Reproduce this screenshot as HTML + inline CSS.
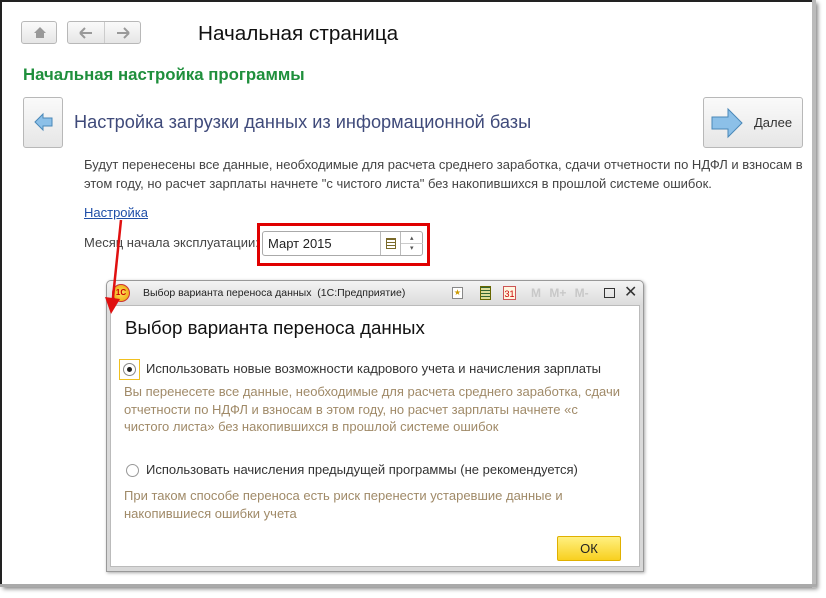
<!DOCTYPE html>
<html><head><meta charset="utf-8"><style>
*{margin:0;padding:0;box-sizing:border-box}
body{width:826px;height:598px;background:#fff;position:relative;overflow:hidden;font-family:"Liberation Sans","DejaVu Sans",sans-serif;color:#444}
.a{position:absolute}
.btn{border:1px solid #b8b8b8;border-radius:3px;background:linear-gradient(#fafafa,#e6e6e6)}
</style></head><body>
<div class="a" style="left:0;top:0;width:815px;height:586px;border-left:2px solid #222;border-top:2px solid #222;box-shadow:3px 3px 4px #888"></div>
<div class="a" style="left:812px;top:0;width:4px;height:588px;background:#bbb"></div>
<div class="a" style="left:0;top:584px;width:816px;height:3px;background:#aaa"></div>

<div class="a btn" style="left:21px;top:21px;width:36px;height:23px"><svg width="36" height="22"><path d="M12 11 L18 5 L24 11 L22 11 L22 16 L14 16 L14 11 Z" fill="#999"/></svg></div>
<div class="a btn" style="left:67px;top:21px;width:74px;height:23px"><div class="a" style="left:36px;top:0;width:1px;height:21px;background:#ccc"></div>
<svg width="72" height="22" class="a" style="left:0;top:0"><path d="M12 11h12M12 11l5-5M12 11l5 5" stroke="#999" stroke-width="2" fill="none"/><path d="M61 11H49M61 11l-5-5M61 11l-5 5" stroke="#999" stroke-width="2" fill="none"/></svg></div>
<div class="a" style="left:198px;top:22px;font-size:20.7px;color:#111">Начальная страница</div>
<div class="a" style="left:23px;top:65px;font-size:16.8px;font-weight:bold;color:#1f8f3c">Начальная настройка программы</div>

<div class="a btn" style="left:23px;top:97px;width:40px;height:51px"><svg width="38" height="50"><path d="M11 24 L19 16 L19 20 L28 20 L28 28 L19 28 L19 32 Z" fill="#8cc0e8" stroke="#4a88b8"/></svg></div>
<div class="a" style="left:74px;top:112px;font-size:18.2px;color:#3f4a7a">Настройка загрузки данных из информационной базы</div>
<div class="a btn" style="left:703px;top:97px;width:100px;height:51px"><svg width="50" height="50" class="a" style="left:4px;top:0"><path d="M4 19 L20 19 L20 11 L34 25 L20 39 L20 31 L4 31 Z" fill="#8cc0e8" stroke="#4a88b8"/></svg><div class="a" style="left:50px;top:17px;font-size:13px;color:#333">Далее</div></div>

<div class="a" style="left:84px;top:155px;font-size:13px;line-height:19px;color:#444;width:740px">Будут перенесены все данные, необходимые для расчета среднего заработка, сдачи отчетности по НДФЛ и взносам в<br>этом году, но расчет зарплаты начнете "с чистого листа" без накопившихся в прошлой системе ошибок.</div>
<div class="a" style="left:84px;top:205px;font-size:13px;color:#1f4fa8;text-decoration:underline">Настройка</div>
<div class="a" style="left:84px;top:235px;font-size:13px;color:#444">Месяц начала эксплуатации:</div>
<div class="a" style="left:257px;top:223px;width:173px;height:43px;border:3px solid #e00000"></div>
<div class="a" style="left:262px;top:231px;width:161px;height:25px;border:1px solid #aaa;border-radius:3px;background:#fff">
<div class="a" style="left:5px;top:4px;font-size:13px;color:#222">Март 2015</div>
<div class="a" style="left:117px;top:0;width:1px;height:23px;background:#bbb"></div>
<div class="a" style="left:123px;top:6px;width:10px;height:11px;border:1px solid #7a6a2a;background:repeating-linear-gradient(#7a6a2a 0 1px,#fff 1px 3px)"></div>
<div class="a" style="left:137px;top:0;width:1px;height:23px;background:#bbb"></div>
<div class="a" style="left:138px;top:11px;width:22px;height:1px;background:#ccc"></div>
<div class="a" style="left:147px;top:2px;font-size:7px;color:#555">▴</div><div class="a" style="left:147px;top:12px;font-size:7px;color:#555">▾</div>
</div>

<div class="a" style="left:106px;top:280px;width:538px;height:292px;border:1px solid #999;border-radius:5px 5px 0 0;background:linear-gradient(#f4f4f4,#dcdcdc 24px,#d8d8d8);box-shadow:1px 1px 3px #aaa">
<div class="a" style="left:5px;top:3px;width:18px;height:18px;border-radius:50%;background:radial-gradient(#ffe060,#e8a000);border:1px solid #c33;font-size:8px;font-weight:bold;color:#c00;text-align:center;line-height:16px">1С</div>
<div class="a" style="left:36px;top:6px;font-size:10.5px;color:#222">Выбор варианта переноса данных &nbsp;(1С:Предприятие)</div>
<div class="a" style="left:345px;top:6px;width:11px;height:12px;border:1px solid #888;background:#fff;font-size:8px;color:#c90;text-align:center;line-height:10px">★</div>
<div class="a" style="left:373px;top:5px;width:11px;height:14px;background:repeating-linear-gradient(#363 0 1px,#dd9 1px 3px);border:1px solid #660"></div>
<div class="a" style="left:396px;top:5px;width:13px;height:14px;border:1px solid #c55;background:#fff6e0;font-size:9px;color:#c00;text-align:center;line-height:14px">31</div>
<div class="a" style="left:424px;top:5px;font-size:12px;font-weight:bold;color:#c8c8c8;word-spacing:5px">M M+ M-</div>
<div class="a" style="left:497px;top:7px;width:11px;height:10px;border:1.5px solid #333"></div>
<div class="a" style="left:517px;top:1px;font-size:16px;color:#333">✕</div>
<div class="a" style="left:3px;top:24px;width:530px;height:262px;background:#fff;border:1px solid #bbb">
<div class="a" style="left:14px;top:11px;font-size:18.7px;color:#111">Выбор варианта переноса данных</div>
<div class="a" style="left:8px;top:53px;width:21px;height:21px;border:1px solid #f0c020"></div>
<div class="a" style="left:12px;top:57px;width:13px;height:13px;border-radius:50%;border:1px solid #888;background:#fff"><div class="a" style="left:3px;top:3px;width:5px;height:5px;border-radius:50%;background:#222"></div></div>
<div class="a" style="left:35px;top:55px;font-size:13px;color:#333">Использовать новые возможности кадрового учета и начисления зарплаты</div>
<div class="a" style="left:13px;top:77px;font-size:13px;line-height:17.5px;color:#a08a68;width:500px">Вы перенесете все данные, необходимые для расчета среднего заработка, сдачи<br>отчетности по НДФЛ и взносам в этом году, но расчет зарплаты начнете «с<br>чистого листа» без накопившихся в прошлой системе ошибок</div>
<div class="a" style="left:15px;top:158px;width:13px;height:13px;border-radius:50%;border:1px solid #999;background:#fff"></div>
<div class="a" style="left:35px;top:156px;font-size:13px;color:#333">Использовать начисления предыдущей программы (не рекомендуется)</div>
<div class="a" style="left:13px;top:181px;font-size:13px;line-height:17.5px;color:#a08a68">При таком способе переноса есть риск перенести устаревшие данные и<br>накопившиеся ошибки учета</div>
<div class="a" style="left:446px;top:230px;width:64px;height:25px;border:1px solid #e0b000;border-radius:2px;background:linear-gradient(#fff080,#f8d020);font-size:13px;color:#222;text-align:center;line-height:23px">ОК</div>
</div></div>

<svg class="a" style="left:100px;top:215px" width="40" height="110"><path d="M21 5 L12 92" stroke="#e01010" stroke-width="2.5"/><path d="M5 82 L11 99 L20 84 Z" fill="#e01010"/></svg>
</body></html>
